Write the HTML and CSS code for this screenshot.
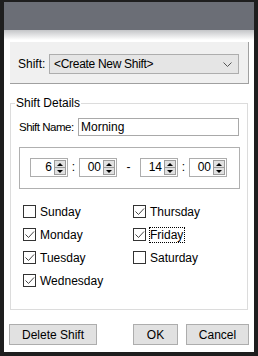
FILE: index.html
```html
<!DOCTYPE html>
<html>
<head>
<meta charset="utf-8">
<link rel="stylesheet" href="styles.css">
</head>
<body>
<div class="window">
  <div class="titlebar"></div>
  <div class="content">
    <div class="shift-panel">
      <span class="shift-label">Shift:</span>
      <div class="combo">
        <span class="combo-text">&lt;Create New Shift&gt;</span>
        <svg class="chev" width="9" height="6" viewBox="0 0 9 6"><polyline points="0.5,0.5 4.5,4.5 8.5,0.5" fill="none" stroke="#555" stroke-width="1"/></svg>
      </div>
    </div>

    <div class="group">
      <span class="group-title">Shift Details</span>
      <div class="name-row">
        <span class="name-label">Shift Name:</span>
        <div class="textbox">Morning</div>
      </div>
      <div class="time-box">
        <div class="spin"><span class="val">6</span><span class="arrows"><span class="up"></span><span class="down"></span></span></div>
        <span class="sep">:</span>
        <div class="spin"><span class="val">00</span><span class="arrows"><span class="up"></span><span class="down"></span></span></div>
        <span class="sep dash">-</span>
        <div class="spin"><span class="val">14</span><span class="arrows"><span class="up"></span><span class="down"></span></span></div>
        <span class="sep">:</span>
        <div class="spin"><span class="val">00</span><span class="arrows"><span class="up"></span><span class="down"></span></span></div>
      </div>
      <div class="days">
        <label class="day"><span class="box"></span><span class="day-text">Sunday</span></label>
        <label class="day"><span class="box"><svg width="11" height="11" viewBox="0 0 11 11"><polyline points="1.5,5.5 4.5,8.5 10,2.5" fill="none" stroke="#444" stroke-width="1"/></svg></span><span class="day-text">Thursday</span></label>
        <label class="day"><span class="box"><svg width="11" height="11" viewBox="0 0 11 11"><polyline points="1.5,5.5 4.5,8.5 10,2.5" fill="none" stroke="#444" stroke-width="1"/></svg></span><span class="day-text">Monday</span></label>
        <label class="day"><span class="box"><svg width="11" height="11" viewBox="0 0 11 11"><polyline points="1.5,5.5 4.5,8.5 10,2.5" fill="none" stroke="#444" stroke-width="1"/></svg></span><span class="day-text focus">Friday</span></label>
        <label class="day"><span class="box"><svg width="11" height="11" viewBox="0 0 11 11"><polyline points="1.5,5.5 4.5,8.5 10,2.5" fill="none" stroke="#444" stroke-width="1"/></svg></span><span class="day-text">Tuesday</span></label>
        <label class="day"><span class="box"></span><span class="day-text">Saturday</span></label>
        <label class="day"><span class="box"><svg width="11" height="11" viewBox="0 0 11 11"><polyline points="1.5,5.5 4.5,8.5 10,2.5" fill="none" stroke="#444" stroke-width="1"/></svg></span><span class="day-text">Wednesday</span></label>
      </div>
    </div>

    <div class="buttons">
      <button class="btn btn-delete">Delete Shift</button>
      <div class="right-buttons">
        <button class="btn btn-ok">OK</button>
        <button class="btn btn-cancel">Cancel</button>
      </div>
    </div>
  </div>
</div>
</body>
</html>
```

FILE: styles.css
```css
* { box-sizing: border-box; }
html, body { margin: 0; padding: 0; }
body {
  background: #1e1e1e;
  width: 258px;
  height: 356px;
  overflow: hidden;
  font-family: "Liberation Sans", Arial, sans-serif;
  font-size: 12px;
  color: #000;
  padding: 2px 0 0 4px;
}
.window {
  width: 250px;
  height: 350px;
  background: #fff;
  display: flex;
  flex-direction: column;
}
.titlebar {
  height: 28px;
  background: #6b6e76;
  flex: none;
}
.content {
  flex: 1;
  background: linear-gradient(to bottom, #c4c5c8 0, #fff 10px);
  padding-top: 12px;
}
.shift-panel {
  margin-left: 6px;
  width: 239px;
  height: 42px;
  background: #f0f0f0;
  border-right: 1px solid #a0a0a0;
  border-bottom: 1px solid #a0a0a0;
  display: flex;
  align-items: flex-start;
  padding: 12px 0 0 8px;
}
.shift-label {
  line-height: 20px;
  width: 31px;
  flex: none;
}
.combo {
  width: 190px;
  height: 20px;
  border: 1px solid #adadad;
  background: #e5e5e5;
  display: flex;
  align-items: center;
  padding-left: 4px;
  padding-right: 6px;
}
.combo-text { flex: 1; line-height: 18px; letter-spacing: -0.3px; }
.chev { flex: none; margin-top: 1px; }

.group {
  position: relative;
  margin: 19px 0 0 6px;
  width: 238px;
  border: 1px solid #dcdcdc;
  padding: 14px 7px 17px 8px;
}
.group-title {
  position: absolute;
  top: -8px;
  left: 4px;
  line-height: 14px;
  background: #fff;
  padding: 0 1px;
}
.name-row {
  display: flex;
  align-items: center;
  height: 18px;
}
.name-label {
  width: 59px;
  flex: none;
  white-space: nowrap;
  font-size: 11.5px;
  letter-spacing: -0.5px;
}
.textbox {
  flex: 1;
  margin-right: 1px;
  height: 18px;
  border: 1px solid #a9a9a9;
  padding-left: 2px;
  line-height: 16px;
}
.time-box {
  margin-top: 11px;
  height: 42px;
  border: 1px solid #b0b0b0;
  display: flex;
  align-items: flex-start;
  padding: 10px 0 0 10px;
}
.spin {
  width: 38px;
  height: 19px;
  border: 1px solid #adadad;
  display: flex;
  flex: none;
  background: #fff;
}
.val {
  flex: 1;
  text-align: right;
  padding-right: 2px;
  line-height: 17px;
}
.arrows {
  width: 13px;
  display: flex;
  flex-direction: column;
  padding: 1px 1px 1px 0;
  flex: none;
}
.up, .down {
  flex: 1;
  background: #e1e1e1;
  border: 1px solid #9c9c9c;
  display: flex;
  align-items: center;
  justify-content: center;
}
.down { border-top: none; }
.up::after {
  content: "";
  border-left: 3px solid transparent;
  border-right: 3px solid transparent;
  border-bottom: 3px solid #000;
}
.down::after {
  content: "";
  border-left: 3px solid transparent;
  border-right: 3px solid transparent;
  border-top: 3px solid #000;
}
.sep {
  width: 11px;
  text-align: center;
  line-height: 19px;
  flex: none;
}
.sep.dash { width: 23px; }

.days {
  margin-top: 11px;
  display: grid;
  grid-template-columns: 110px 1fr;
  grid-auto-rows: 23px;
  padding-left: 4px;
}
.day {
  display: flex;
  align-items: center;
}
.box {
  width: 13px;
  height: 13px;
  border: 1px solid #333;
  background: #fff;
  flex: none;
  margin-right: 4px;
  display: flex;
}
.box svg { display: block; }
.day-text { line-height: 14px; }
.focus {
  outline: 1px dotted #000;
  outline-offset: 0;
  padding: 0 1px 0 0;
}

.buttons {
  margin-top: 14px;
  display: flex;
  justify-content: space-between;
  padding: 0 5px 0 5px;
}
.right-buttons { display: flex; gap: 8px; }
.btn {
  font-family: "Liberation Sans", Arial, sans-serif;
  font-size: 12px;
  color: #000;
  height: 21px;
  background: #e1e1e1;
  border: 1px solid #adadad;
  padding: 0;
  margin: 0;
}
.btn-delete { width: 88px; }
.btn-ok { width: 45px; }
.btn-cancel { width: 63px; }
```
